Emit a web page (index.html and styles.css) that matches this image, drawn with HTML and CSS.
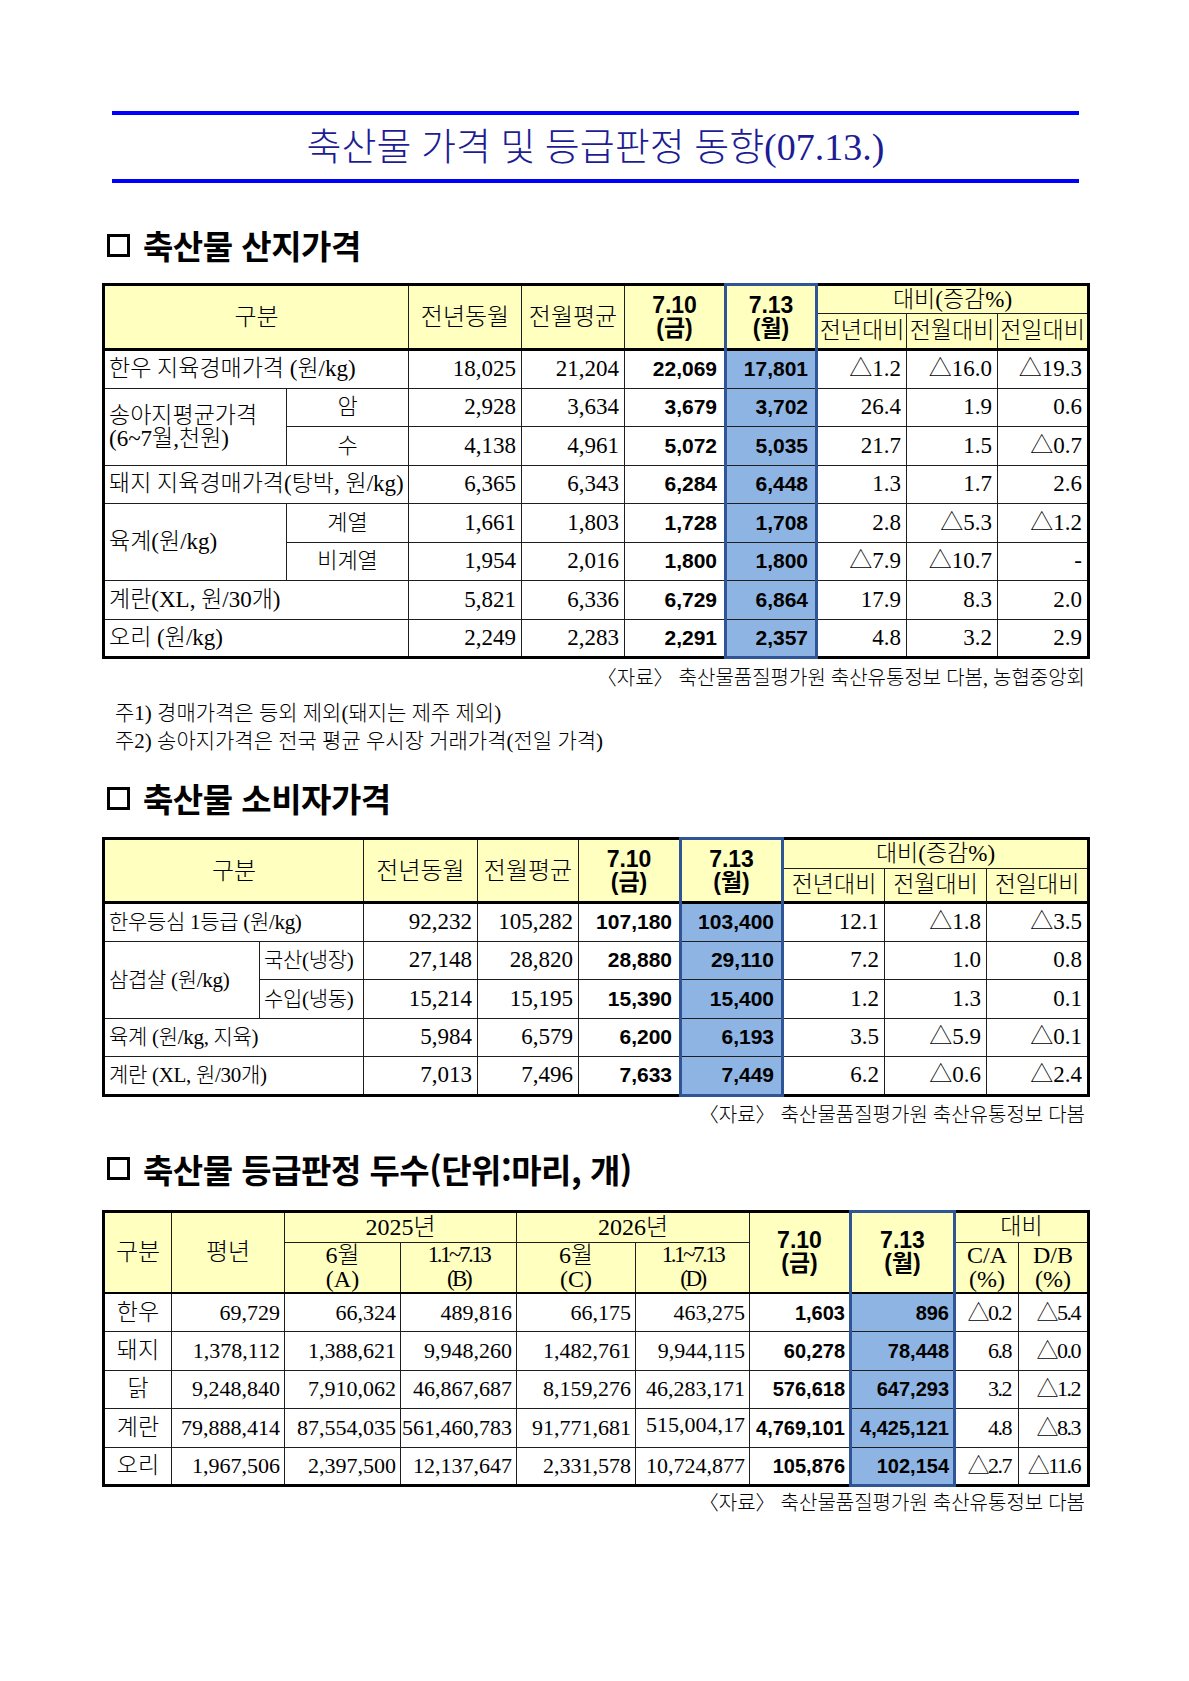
FILE: index.html
```html
<!DOCTYPE html>
<html lang="ko">
<head>
<meta charset="utf-8">
<title>축산물 가격 및 등급판정 동향</title>
<link rel="stylesheet" href="styles.css">
</head>
<body>
<div class="page">
  <h1 class="title">축산물 가격 및 등급판정 동향(07.13.)</h1>

  <h2 class="sec sec-first">축산물 산지가격</h2>
  <table class="t t1">
    <colgroup>
      <col style="width:183px"><col style="width:122px"><col style="width:113px"><col style="width:103px"><col style="width:101px"><col style="width:91px"><col style="width:90px"><col style="width:91px"><col style="width:91px">
    </colgroup>
    <thead>
      <tr class="hr1">
        <th colspan="2" rowspan="2">구분</th>
        <th rowspan="2">전년동월</th>
        <th rowspan="2">전월평균</th>
        <th rowspan="2" class="d">7.10<br>(금)</th>
        <th rowspan="2" class="d bl">7.13<br>(월)</th>
        <th colspan="3" class="sm">대비(증감%)</th>
      </tr>
      <tr class="hr2">
        <th class="sm">전년대비</th><th class="sm">전월대비</th><th class="sm">전일대비</th>
      </tr>
    </thead>
    <tbody>
      <tr><td colspan="2" class="k">한우 지육경매가격 (원/kg)</td><td class="n">18,025</td><td class="n">21,204</td><td class="n b">22,069</td><td class="n b bl">17,801</td><td class="n">△1.2</td><td class="n">△16.0</td><td class="n">△19.3</td></tr>
      <tr><td rowspan="2" class="k two">송아지평균가격<br>(6~7월,천원)</td><td class="c">암</td><td class="n">2,928</td><td class="n">3,634</td><td class="n b">3,679</td><td class="n b bl">3,702</td><td class="n">26.4</td><td class="n">1.9</td><td class="n">0.6</td></tr>
      <tr><td class="c">수</td><td class="n">4,138</td><td class="n">4,961</td><td class="n b">5,072</td><td class="n b bl">5,035</td><td class="n">21.7</td><td class="n">1.5</td><td class="n">△0.7</td></tr>
      <tr><td colspan="2" class="k">돼지 지육경매가격(탕박, 원/kg)</td><td class="n">6,365</td><td class="n">6,343</td><td class="n b">6,284</td><td class="n b bl">6,448</td><td class="n">1.3</td><td class="n">1.7</td><td class="n">2.6</td></tr>
      <tr><td rowspan="2" class="k">육계(원/kg)</td><td class="c">계열</td><td class="n">1,661</td><td class="n">1,803</td><td class="n b">1,728</td><td class="n b bl">1,708</td><td class="n">2.8</td><td class="n">△5.3</td><td class="n">△1.2</td></tr>
      <tr><td class="c">비계열</td><td class="n">1,954</td><td class="n">2,016</td><td class="n b">1,800</td><td class="n b bl">1,800</td><td class="n">△7.9</td><td class="n">△10.7</td><td class="n">-</td></tr>
      <tr><td colspan="2" class="k">계란(XL, 원/30개)</td><td class="n">5,821</td><td class="n">6,336</td><td class="n b">6,729</td><td class="n b bl">6,864</td><td class="n">17.9</td><td class="n">8.3</td><td class="n">2.0</td></tr>
      <tr><td colspan="2" class="k">오리 (원/kg)</td><td class="n">2,249</td><td class="n">2,283</td><td class="n b">2,291</td><td class="n b bl last">2,357</td><td class="n">4.8</td><td class="n">3.2</td><td class="n">2.9</td></tr>
    </tbody>
  </table>
  <p class="src">〈자료〉 축산물품질평가원 축산유통정보 다봄, 농협중앙회</p>
  <div class="notes">
    <p>주1) 경매가격은 등외 제외(돼지는 제주 제외)</p>
    <p>주2) 송아지가격은 전국 평균 우시장 거래가격(전일 가격)</p>
  </div>

  <h2 class="sec">축산물 소비자가격</h2>
  <table class="t t2">
    <colgroup>
      <col style="width:156px"><col style="width:104px"><col style="width:114px"><col style="width:101px"><col style="width:102px"><col style="width:102px"><col style="width:102px"><col style="width:102px"><col style="width:102px">
    </colgroup>
    <thead>
      <tr class="hr1">
        <th colspan="2" rowspan="2">구분</th>
        <th rowspan="2">전년동월</th>
        <th rowspan="2">전월평균</th>
        <th rowspan="2" class="d">7.10<br>(금)</th>
        <th rowspan="2" class="d bl">7.13<br>(월)</th>
        <th colspan="3" class="sm">대비(증감%)</th>
      </tr>
      <tr class="hr2">
        <th class="sm">전년대비</th><th class="sm">전월대비</th><th class="sm">전일대비</th>
      </tr>
    </thead>
    <tbody>
      <tr><td colspan="2" class="k">한우등심 1등급 (원/kg)</td><td class="n">92,232</td><td class="n">105,282</td><td class="n b">107,180</td><td class="n b bl">103,400</td><td class="n">12.1</td><td class="n">△1.8</td><td class="n">△3.5</td></tr>
      <tr><td rowspan="2" class="k">삼겹살 (원/kg)</td><td class="k">국산(냉장)</td><td class="n">27,148</td><td class="n">28,820</td><td class="n b">28,880</td><td class="n b bl">29,110</td><td class="n">7.2</td><td class="n">1.0</td><td class="n">0.8</td></tr>
      <tr><td class="k">수입(냉동)</td><td class="n">15,214</td><td class="n">15,195</td><td class="n b">15,390</td><td class="n b bl">15,400</td><td class="n">1.2</td><td class="n">1.3</td><td class="n">0.1</td></tr>
      <tr><td colspan="2" class="k">육계 (원/kg, 지육)</td><td class="n">5,984</td><td class="n">6,579</td><td class="n b">6,200</td><td class="n b bl">6,193</td><td class="n">3.5</td><td class="n">△5.9</td><td class="n">△0.1</td></tr>
      <tr><td colspan="2" class="k">계란 (XL, 원/30개)</td><td class="n">7,013</td><td class="n">7,496</td><td class="n b">7,633</td><td class="n b bl last">7,449</td><td class="n">6.2</td><td class="n">△0.6</td><td class="n">△2.4</td></tr>
    </tbody>
  </table>
  <p class="src">〈자료〉 축산물품질평가원 축산유통정보 다봄</p>

  <h2 class="sec sec-3">축산물 등급판정 두수(단위:마리, 개)</h2>
  <table class="t t3">
    <colgroup>
      <col style="width:68px"><col style="width:113px"><col style="width:116px"><col style="width:116px"><col style="width:119px"><col style="width:114px"><col style="width:101px"><col style="width:104px"><col style="width:64px"><col style="width:70px">
    </colgroup>
    <thead>
      <tr class="hr1">
        <th rowspan="2">구분</th>
        <th rowspan="2">평년</th>
        <th colspan="2">2025년</th>
        <th colspan="2">2026년</th>
        <th rowspan="2" class="d">7.10<br>(금)</th>
        <th rowspan="2" class="d bl">7.13<br>(월)</th>
        <th colspan="2" class="sm">대비</th>
      </tr>
      <tr class="hr2">
        <th class="two">6월<br>(A)</th>
        <th class="two cond">1.1~7.13<br>(B)</th>
        <th class="two">6월<br>(C)</th>
        <th class="two cond">1.1~7.13<br>(D)</th>
        <th class="two">C/A<br>(%)</th>
        <th class="two">D/B<br>(%)</th>
      </tr>
    </thead>
    <tbody>
      <tr><td class="c">한우</td><td class="n">69,729</td><td class="n">66,324</td><td class="n">489,816</td><td class="n">66,175</td><td class="n">463,275</td><td class="n b">1,603</td><td class="n b bl">896</td><td class="n cn">△0.2</td><td class="n cn">△5.4</td></tr>
      <tr><td class="c">돼지</td><td class="n">1,378,112</td><td class="n">1,388,621</td><td class="n">9,948,260</td><td class="n">1,482,761</td><td class="n">9,944,115</td><td class="n b">60,278</td><td class="n b bl">78,448</td><td class="n cn">6.8</td><td class="n cn">△0.0</td></tr>
      <tr><td class="c">닭</td><td class="n">9,248,840</td><td class="n">7,910,062</td><td class="n">46,867,687</td><td class="n">8,159,276</td><td class="n">46,283,171</td><td class="n b">576,618</td><td class="n b bl">647,293</td><td class="n cn">3.2</td><td class="n cn">△1.2</td></tr>
      <tr><td class="c">계란</td><td class="n">79,888,414</td><td class="n">87,554,035</td><td class="n">561,460,783</td><td class="n">91,771,681</td><td class="n up">515,004,17</td><td class="n b">4,769,101</td><td class="n b bl">4,425,121</td><td class="n cn">4.8</td><td class="n cn">△8.3</td></tr>
      <tr><td class="c">오리</td><td class="n">1,967,506</td><td class="n">2,397,500</td><td class="n">12,137,647</td><td class="n">2,331,578</td><td class="n">10,724,877</td><td class="n b">105,876</td><td class="n b bl last">102,154</td><td class="n cn">△2.7</td><td class="n cn">△11.6</td></tr>
    </tbody>
  </table>
  <p class="src src-3">〈자료〉 축산물품질평가원 축산유통정보 다봄</p>
</div>
</body>
</html>
```
FILE: styles.css
```css
html, body {
  margin: 0;
  padding: 0;
  background: #ffffff;
}

body {
  font-family: "Liberation Serif", "Noto Sans CJK KR", serif;
  font-weight: 300;
  color: #000000;
}

.page {
  width: 985px;
  margin-left: 102px;
  padding-top: 111px;
}

p { margin: 0; }

.title {
  margin: 0 8px 0 10px;
  box-sizing: content-box;
  padding: 0 0 8px;
  height: 56px;
  border-top: 4px solid #0000ff;
  border-bottom: 4px solid #0000ff;
  display: flex;
  align-items: center;
  justify-content: center;
  font-size: 38px;
  font-weight: 300;
  color: #1c1c94;
}

.sec {
  margin: 25px 0 21px 5px;
  display: flex;
  align-items: center;
  gap: 13px;
  font-family: "Noto Sans CJK KR", sans-serif;
  font-weight: 700;
  font-size: 33px;
  line-height: 36px;
  letter-spacing: -0.5px;
}

.sec::before {
  content: "";
  width: 23px;
  height: 23px;
  box-sizing: border-box;
  border: 3px solid #000000;
  flex: none;
}

.sec-first { margin-top: 44px; margin-bottom: 20px; }
.sec-3 { margin-top: 24px; margin-bottom: 23px; }

.t {
  width: 985px;
  table-layout: fixed;
  border-collapse: collapse;
  border: 3px solid #000000;
}

.t th, .t td {
  border: 1px solid #1e1e1e;
  padding: 0;
  white-space: nowrap;
  overflow: hidden;
}

.t th {
  background: #ffffc0;
  font-weight: 300;
  font-size: 24px;
  line-height: 24px;
  text-align: center;
  vertical-align: middle;
}

.t th.sm { font-size: 23px; }

.t th.d {
  font-family: "Liberation Sans", "Noto Sans CJK KR", sans-serif;
  font-weight: 700;
  font-size: 23px;
  line-height: 23px;
}

.t tbody tr:first-child td { border-top: 3px solid #000000; }

.t tbody tr { height: 38.5px; }

.t1 .hr1 { height: 29px; }
.t1 .hr2 { height: 36px; }
.t2 .hr1 { height: 30px; }
.t2 .hr2 { height: 34px; }
.t3 .hr1 { height: 31px; }
.t3 .hr2 { height: 51px; }
.t3 tbody tr:first-child td { border-top: 2px solid #000000; }

.t td {
  font-size: 23px;
  line-height: 24px;
  vertical-align: middle;
}

.t td.k {
  text-align: left;
  padding-left: 4px;
  font-size: 23px;
}

.t2 td.k {
  font-size: 21px;
  letter-spacing: -0.3px;
}

.t td.two { line-height: 23px; }

.t td.c {
  text-align: center;
  font-size: 22px;
}

.t td.n {
  text-align: right;
  padding-right: 5px;
}

.t td.b {
  font-family: "Liberation Sans", "Noto Sans CJK KR", sans-serif;
  font-weight: 700;
  font-size: 21px;
  padding-right: 7px;
}

.t th.bl {
  border-left: 3px solid #2f5597;
  border-right: 3px solid #2f5597;
  border-top: 3px solid #2f5597;
}

.t td.bl {
  background: #8db4e2;
  border-left: 3px solid #2f5597;
  border-right: 3px solid #2f5597;
}

.t td.bl.last { border-bottom: 3px solid #2f5597; }

.t3 th.two { line-height: 24px; }
.t3 th.cond { letter-spacing: -2.5px; font-size: 23px; }
.t3 td { font-size: 22px; }
.t3 td.c { font-size: 23px; }
.t3 td.n { padding-right: 4px; }
.t3 td.b { font-size: 20px; padding-right: 4px; }
.t3 td.cn { letter-spacing: -1.5px; padding-right: 7px; }
.t3 td.up { vertical-align: top; padding-top: 4px; }

.src {
  margin: 7px 2px 0 0;
  text-align: right;
  font-size: 20px;
  line-height: 24px;
}

.t2 + .src { margin-top: 6px; }
.src-3 { margin-top: 4px; }

.notes {
  margin: 9px 0 0 13px;
  font-size: 21px;
  line-height: 28px;
}
```
